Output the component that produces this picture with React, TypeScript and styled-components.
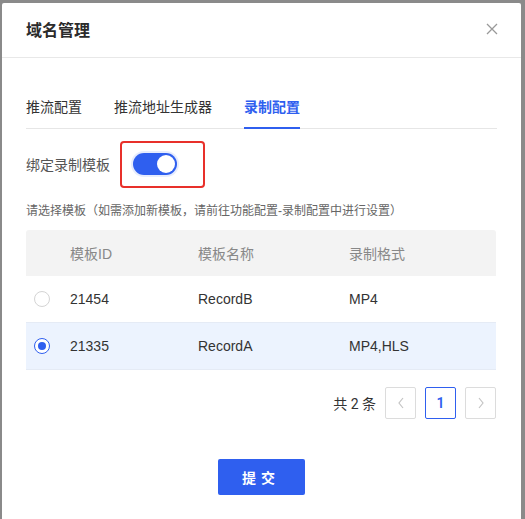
import React, { useState } from "react";
import styled, { createGlobalStyle } from "styled-components";

const Global = createGlobalStyle`
  html, body { margin: 0; padding: 0; background: #8a8a8a; }
  body { font-family: "Liberation Sans", "Noto Sans CJK SC", sans-serif; }
  * { box-sizing: border-box; }
`;

const Backdrop = styled.div`
  width: 525px;
  height: 519px;
  padding: 3px 4px 0 2px;
  background: #8a8a8a;
  overflow: hidden;
`;

const Modal = styled.div`
  width: 519px;
  height: 516px;
  background: #fff;
  border-radius: 2px 2px 0 0;
  display: flex;
  flex-direction: column;
`;

const Header = styled.div`
  height: 55px;
  border-bottom: 1px solid #e8e8e8;
  display: flex;
  align-items: center;
  justify-content: space-between;
  padding: 0 22px 2px 24px;
`;

const Title = styled.div`
  font-size: 16px;
  font-weight: 600;
  color: #2b2b2b;
`;

const Close = styled.button`
  border: 0;
  background: none;
  padding: 0;
  width: 14px;
  height: 14px;
  display: flex;
  cursor: pointer;
`;

const Body = styled.div`
  padding: 0 24px;
  display: flex;
  flex-direction: column;
`;

const Tabs = styled.div`
  margin-top: 39px;
  display: flex;
  gap: 32px;
  border-bottom: 1px solid #e6e6e6;
`;

const Tab = styled.div<{ $active?: boolean }>`
  font-size: 14px;
  height: 32px;
  line-height: 20px;
  color: ${(p) => (p.$active ? "#2f5fef" : "#333")};
  font-weight: ${(p) => (p.$active ? 600 : 400)};
  border-bottom: 2px solid ${(p) => (p.$active ? "#2f5fef" : "transparent")};
  margin-bottom: -1px;
`;

const SwitchRow = styled.div`
  margin-top: 12px;
  display: flex;
  align-items: center;
  height: 46px;
`;

const Label = styled.div`
  font-size: 14px;
  color: #555;
  width: 94px;
`;

const Highlight = styled.div`
  border: 2px solid #e8302a;
  border-radius: 4px;
  width: 85px;
  height: 47px;
  display: flex;
  align-items: center;
  padding-left: 11px;
`;

const Toggle = styled.div`
  width: 44px;
  height: 22px;
  border-radius: 11px;
  background: #2f5fef;
  display: flex;
  align-items: center;
  justify-content: flex-end;
  padding-right: 2px;
  box-shadow: 0 0 0 2px rgba(47, 95, 239, 0.12);
`;

const Knob = styled.div`
  width: 18px;
  height: 18px;
  border-radius: 50%;
  background: #fff;
`;

const Hint = styled.div`
  margin-top: 16px;
  font-size: 12px;
  color: #666;
  line-height: 16px;
`;

const Table = styled.div`
  margin-top: 11px;
  display: flex;
  flex-direction: column;
  width: 470px;
`;

const Grid = styled.div<{ $head?: boolean; $selected?: boolean }>`
  display: grid;
  grid-template-columns: 44px 128px 151px 1fr;
  align-items: center;
  height: ${(p) => (p.$head ? "46px" : "47px")};
  background: ${(p) => (p.$head ? "#f3f3f3" : p.$selected ? "#ecf3fe" : "#fff")};
  border-bottom: 1px solid ${(p) => (p.$head ? "#f3f3f3" : "#e5ebf5")};
  font-size: 14px;
  color: ${(p) => (p.$head ? "#888" : "#333")};
  border-radius: ${(p) => (p.$head ? "3px 3px 0 0" : "0")};
`;

const Cell = styled.div`
  white-space: nowrap;
`;

const RadioCell = styled.div`
  display: flex;
  padding-left: 8px;
`;

const Radio = styled.div<{ $checked?: boolean }>`
  width: 16px;
  height: 16px;
  border-radius: 50%;
  border: 1px solid ${(p) => (p.$checked ? "#2f5fef" : "#d4d4d4")};
  display: flex;
  align-items: center;
  justify-content: center;
  background: #fff;
  &::after {
    content: "";
    width: 8px;
    height: 8px;
    border-radius: 50%;
    background: ${(p) => (p.$checked ? "#2f5fef" : "transparent")};
  }
`;

const Pager = styled.div`
  margin-top: 17px;
  display: flex;
  justify-content: flex-end;
  align-items: center;
  gap: 9px;
  width: 470px;
`;

const Total = styled.div`
  font-size: 14px;
  color: #333;
  font-family: Roboto, "Noto Sans CJK SC", sans-serif;
`;

const PageBtn = styled.div<{ $active?: boolean }>`
  width: 31px;
  height: 32px;
  border: 1px solid ${(p) => (p.$active ? "#2f5fef" : "#dcdcdc")};
  border-radius: 2px;
  display: flex;
  align-items: center;
  justify-content: center;
  font-size: 14px;
  font-weight: 600;
  color: ${(p) => (p.$active ? "#2f5fef" : "#c4c4c4")};
  font-family: Roboto, sans-serif;
`;

const Footer = styled.div`
  margin-top: 40px;
  display: flex;
  justify-content: center;
`;

const Submit = styled.button`
  width: 87px;
  height: 36px;
  border: 0;
  border-radius: 2px;
  background: #2f5fef;
  color: #fff;
  font-size: 14px;
  font-weight: 600;
  letter-spacing: 5px;
  padding-left: 5px;
  font-family: "Noto Sans CJK SC", sans-serif;
`;

const rows = [
  { id: "21454", name: "RecordB", fmt: "MP4" },
  { id: "21335", name: "RecordA", fmt: "MP4,HLS" },
];

export default function App() {
  const [sel, setSel] = useState("21335");
  return (
    <Backdrop>
      <Global />
      <Modal>
        <Header>
          <Title>域名管理</Title>
          <Close aria-label="close">
            <svg width="14" height="14" viewBox="0 0 14 14">
              <path d="M2 2L12 12M12 2L2 12" stroke="#999" strokeWidth="1.3" fill="none" />
            </svg>
          </Close>
        </Header>
        <Body>
          <Tabs>
            <Tab>推流配置</Tab>
            <Tab>推流地址生成器</Tab>
            <Tab $active>录制配置</Tab>
          </Tabs>
          <SwitchRow>
            <Label>绑定录制模板</Label>
            <Highlight>
              <Toggle>
                <Knob />
              </Toggle>
            </Highlight>
          </SwitchRow>
          <Hint>请选择模板（如需添加新模板，请前往功能配置-录制配置中进行设置）</Hint>
          <Table>
            <Grid $head>
              <Cell />
              <Cell>模板ID</Cell>
              <Cell>模板名称</Cell>
              <Cell>录制格式</Cell>
            </Grid>
            {rows.map((r) => (
              <Grid key={r.id} $selected={sel === r.id} onClick={() => setSel(r.id)}>
                <RadioCell>
                  <Radio $checked={sel === r.id} />
                </RadioCell>
                <Cell>{r.id}</Cell>
                <Cell>{r.name}</Cell>
                <Cell>{r.fmt}</Cell>
              </Grid>
            ))}
          </Table>
          <Pager>
            <Total>共 2 条</Total>
            <PageBtn>
              <svg width="8" height="12" viewBox="0 0 8 12">
                <path d="M6 1L2 6L6 11" stroke="#c4c4c4" strokeWidth="1.2" fill="none" />
              </svg>
            </PageBtn>
            <PageBtn $active>1</PageBtn>
            <PageBtn>
              <svg width="8" height="12" viewBox="0 0 8 12">
                <path d="M2 1L6 6L2 11" stroke="#c4c4c4" strokeWidth="1.2" fill="none" />
              </svg>
            </PageBtn>
          </Pager>
          <Footer>
            <Submit>提交</Submit>
          </Footer>
        </Body>
      </Modal>
    </Backdrop>
  );
}
